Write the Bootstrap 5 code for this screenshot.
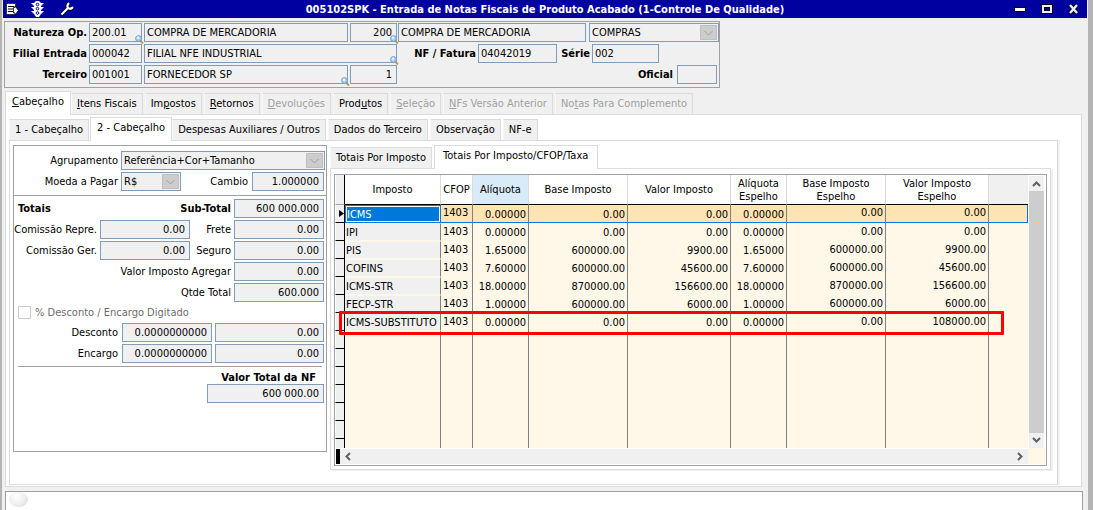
<!DOCTYPE html>
<html lang="pt-BR">
<head>
<meta charset="utf-8">
<meta name="viewport" content="width=device-width, initial-scale=1">
<title>Entrada de Notas Fiscais de Produto Acabado</title>
<link href="https://cdn.jsdelivr.net/npm/bootstrap@5.3.0/dist/css/bootstrap.min.css" rel="stylesheet">
<style>
:root{--face:#f0f0f0;--line:#dcdcdc;--dark:#a0a0a0;--field:#7f9db9;--cream:#fff8e8}
body{font:11px/13px Tahoma,"DejaVu Sans Condensed","DejaVu Sans",sans-serif;color:#000;background:var(--face);border-left:2px solid #b4b4b4;border-right:5px solid #b4b4b4;padding:0 1px}
button,input,select{font:inherit;color:inherit}
.titlebar{background:#0000a0;height:18px;color:#fff}
.titlebar h1{font:inherit;font-weight:bold;margin:0}
.icon-btn{border:0;background:none;padding:0;display:flex;align-items:center;justify-content:center;height:17px}
.tools,.winctl{width:76px;flex:none}
.tools{gap:11px;padding-left:3px}
.winctl{gap:15px;justify-content:flex-end;padding-right:8px}
.panel-head{width:716px;border:1px solid var(--dark);margin:3px 1px 0;padding:1px;height:67px}
.stack{display:flex;flex-direction:column;gap:2px}
.line{display:flex;align-items:center;height:19px}
.line label{text-align:right;flex:none;white-space:nowrap}
.line-tick{height:17px}
.fld{display:block;height:19px;border:1px solid var(--field);background:var(--face);border-radius:0;padding:0 2px;outline:0;min-width:0;flex:none}
.fld.num{text-align:right;padding-right:4px}
select.fld{appearance:none;padding:0 20px 0 2px;opacity:1;background:var(--face) url("data:image/svg+xml,%3Csvg xmlns='http://www.w3.org/2000/svg' width='17' height='15'%3E%3Cpath d='M.5.5h16v14H.5z' fill='%23ccc' stroke='%23bfbfbf'/%3E%3Cpath d='M4.500 6l4 4 4-4' fill='none' stroke='%23a0a0a0'/%3E%3C/svg%3E") no-repeat right 1px center}
.w-s{width:40px}.w-code{width:53px}.w-cur{width:60px}.w-ser{width:67px}.w-nf{width:79px}.w-val{width:90px}.w-tot{width:117px}.w-name{width:204px}.w-nat{width:188px}.w-wide{width:253px}.w-combo{width:130px}.w-n{width:47px}.w-cam{width:72px}.w-disc{width:109px}
.ms-1px{margin-left:1px}.ms-2px{margin-left:2px}.ms-3px{margin-left:3px}.me-1px{margin-right:1px}
.l-head{width:81px;margin-right:2px}.l-side{width:104px}.l-mid{width:41px}.l-ser{width:33px}.dim{color:#6d6d6d}
.lookup{position:relative;flex:none}
.lookup svg{position:absolute;right:-2px;bottom:-2px}
.tabs{display:flex;align-items:flex-end;padding:0;margin:0;gap:2px;position:relative}
.tabs-a{margin:3px 0 0 2px}
.tabs button{height:21px;border:1px solid var(--line);border-left-color:#f8f8f8;border-bottom:0;background:var(--face);padding:0 5px;white-space:nowrap;line-height:20px}
.tabs button.active{background:#fff;height:24px;margin:0 -2px -1px 0;border-left-color:var(--line);position:relative;padding:0 6px 3px}
.tabs-b button.active{margin-left:-1px}
.tabs-c button.active{padding:0 9px 3px 8px}
.tabs button:disabled{color:#a0a0a0}
.pane{background:#fff;border:1px solid var(--line)}
.pane-a{margin:0 5px 0 2px;padding:2px 23px 1px 3px}
.pane-b{box-shadow:2px 0 0 var(--face);padding:4px 6px 14px 3px;display:flex;align-items:flex-start;gap:3px}
.side{width:314px;flex:none;border:1px solid var(--dark);height:307px}
.side .top{border-bottom:1px solid var(--dark);padding:5px 2px 3px 0;height:50px}
.side .sum{padding:3px 2px 0 4px}
.rule{border-top:1px solid var(--dark);margin:1px 2px 2px 0}
.grow-box{min-width:0;flex:1}
.pane-c{padding:5px 3px 3px;box-shadow:2px 1px 0 var(--face)}
.gridbox{border:1px solid var(--dark);display:grid;grid-template-columns:minmax(0,1fr) 18px;background:#fff;grid-template-rows:273px 17px}
.tax{table-layout:fixed;width:100%;border-collapse:separate;border-spacing:0;background:var(--cream)}
.tax th{font-weight:normal;text-align:center;vertical-align:middle;background:#fff;border-right:1px solid var(--line);border-bottom:1px solid #000;height:30px;padding:0}
.tax td{height:18px;padding:1px 2px 0 2px;border-right:1px solid #808080;text-align:right;vertical-align:middle;white-space:nowrap}
.tax td.up{padding:0 2px 2px}
.tax td:nth-child(3){text-align:left}
.tax td:nth-child(2){text-align:left;padding-left:1px;background:var(--face);border-top:1px solid var(--cream);border-bottom:1px solid var(--cream);background-clip:padding-box}
.tax .void td:nth-child(2){background:none;border-top:0;border-bottom:0}
.tax td:first-child,.tax th:first-child{background:var(--face);border-right:1px solid #000;padding:0;border-left:1px solid #fff}
.tax td:first-child{border-bottom:1px solid #000}
.tax th:first-child{border-bottom-color:var(--dark)}
.tax .sorted{background:#d9ebf9}
.tax th:last-child{background:var(--face);border-right:0}
.tax td:last-child{border-right:0}
.tax .cur td{background:#fde4b3;border-bottom:1px solid #0078d7}
.tax .cur td:first-child{background:var(--face);border-bottom-color:#000}
.tax .cur td:last-child{border-right:1px solid #0078d7}
.tax .cur td:nth-child(2){background:#0078d7;color:#fff;border:1px solid #0078d7;box-shadow:inset 0 0 0 1px #fff;padding:0 0 0 1px}
.tax .void.half td{height:9px;line-height:8px;padding:0;border-bottom:0}
.tax tr{position:relative}
.flag{position:absolute;left:4px;right:24px;top:-2px;height:24px;border:3px solid #f00;border-radius:1px;z-index:2}
.vbar{display:flex;flex-direction:column;padding:1px 2px 0 1px}
.vbar .thumb{background:#cdcdcd;flex:1}
.bar-btn{border:0;padding:0;background:var(--face);width:15px;height:15px;display:flex;align-items:center;justify-content:center;flex:none}
.hbar{background:var(--face);border:1px solid #fff;border-right:0;display:flex;justify-content:space-between}
.hbar i{width:4px;background:#000}
.corner{background:var(--cream);margin:0 1px 1px 0}
.status{flex:1;background:#fff;border:1px solid var(--dark);border-bottom:0;margin:4px 4px 0 2px;padding-left:3px}
.orb{width:19px;height:15px;border-radius:50%;background:radial-gradient(circle at 40% 30%,#fff,#eee 55%,#d0d0d0)}
.tick{width:13px;height:13px;appearance:none;border:1px solid #ccc;background:#fff;margin:0 4px 0 0}
</style>
</head>
<body class="d-flex flex-column min-vh-100">
<svg class="d-none" aria-hidden="true"><symbol id="mag" viewBox="0 0 9 9"><path d="M5 5.500l3 3" stroke="#c8904a" stroke-width="1.800"/><circle cx="3.500" cy="3.500" r="2.900" fill="#a9d2f5" stroke="#6f9fd0"/><circle cx="3" cy="2.800" r="1.200" fill="#eaf6ff"/></symbol></svg>
<header class="titlebar d-flex align-items-center">
  <div class="tools d-flex">
    <button class="icon-btn" aria-label="Menu"><svg width="13" height="13" viewBox="0 0 13 13"><path d="M.5.500h9v11h-9z" fill="#fff" stroke="#000" stroke-width=".6"/><path d="M2 3.500h6M2 6h5M2 8.500h5" stroke="#000"/><path d="M7.500 4.500h1.500V3l3.500 4.500L9 12v-2H7.500z" fill="#fff" stroke="#000" stroke-width=".8"/></svg></button>
    <button class="icon-btn" aria-label="Semáforo"><svg width="15" height="16" viewBox="0 0 15 16"><path d="M6 0h3l2 2h3l-3 3v1h3l-3 3v1h3l-3 3-2 3H6l-2-3-3-3h3V9L1 6h3V5L1 2h3z" fill="#fff"/><g fill="#fff" stroke="#0000a0"><circle cx="7.500" cy="3.500" r="1.300"/><circle cx="7.500" cy="7.700" r="1.300"/><circle cx="7.500" cy="12" r="1.300"/></g></svg></button>
    <button class="icon-btn ms-1" aria-label="Ferramentas"><svg width="14" height="14" viewBox="0 0 14 14"><path d="M1.500 12.500L7.500 6.500M8.500 1C6.500 3 6.500 5 8 6.300S11.500 7 13 5" fill="none" stroke="#000" stroke-width="3.400"/><path d="M1.500 12.500L7.500 6.500M9 1C7 3 7 5 8.200 6S11.500 6.700 13 5" fill="none" stroke="#fff" stroke-width="2.200"/></svg></button>
  </div>
  <h1 class="flex-grow-1 text-center">005102SPK - Entrada de Notas Fiscais de Produto Acabado (1-Controle De Qualidade)</h1>
  <div class="winctl d-flex">
    <button class="icon-btn" aria-label="Minimizar"><svg width="12" height="5"><path d="M.5.5h11v4H.5z" fill="#fff" stroke="#000"/></svg></button>
    <button class="icon-btn" aria-label="Maximizar"><svg width="12" height="10"><path d="M2 2h8v6H2z" fill="none" stroke="#000" stroke-width="4"/><path d="M2 2h8v6H2z" fill="none" stroke="#eee" stroke-width="2"/></svg></button>
    <button class="icon-btn" aria-label="Fechar"><svg width="11" height="10"><path d="M2 1l7 8M9 1L2 9" stroke="#000" stroke-width="4"/><path d="M2 1l7 8M9 1L2 9" stroke="#eee" stroke-width="2.400"/></svg></button>
  </div>
</header>

<section class="panel-head stack">
  <div class="line"><label class="l-head fw-bold" for="nat">Natureza Op.</label>
    <span class="lookup"><input id="nat" class="fld w-code" value="200.01" readonly><svg width="9" height="9"><use href="#mag"/></svg></span>
    <input aria-label="Natureza" class="fld w-name ms-2px" value="COMPRA DE MERCADORIA" readonly>
    <span class="lookup ms-2px"><input aria-label="Código" class="fld num w-n" value="200" readonly><svg width="9" height="9"><use href="#mag"/></svg></span>
    <input aria-label="Descrição" class="fld w-nat ms-1px" value="COMPRA DE MERCADORIA" readonly>
    <select aria-label="Tipo" class="fld w-combo ms-3px"><option>COMPRAS</option></select></div>
  <div class="line"><label class="l-head fw-bold" for="fil">Filial Entrada</label>
    <input id="fil" class="fld w-code" value="000042" readonly>
    <span class="lookup ms-2px"><input aria-label="Filial" class="fld w-wide" value="FILIAL NFE INDUSTRIAL" readonly><svg width="9" height="9"><use href="#mag"/></svg></span>
    <label class="w-nf fw-bold" for="nf">NF / Fatura</label><input id="nf" class="fld w-nf ms-2px" value="04042019" readonly>
    <label class="fw-bold l-ser" for="ser">Série</label><input id="ser" class="fld w-ser ms-2px" value="002" readonly></div>
  <div class="line"><label class="l-head fw-bold" for="ter">Terceiro</label>
    <input id="ter" class="fld w-code" value="001001" readonly>
    <span class="lookup ms-2px"><input aria-label="Nome do terceiro" class="fld w-name" value="FORNECEDOR SP" readonly><svg width="9" height="9"><use href="#mag"/></svg></span>
    <input aria-label="Loja" class="fld num w-n ms-2px" value="1" readonly>
    <label class="fw-bold ms-auto me-1" for="ofi">Oficial</label><input id="ofi" class="fld w-s me-1px" readonly></div>
</section>

<nav class="tabs tabs-a" role="tablist">
  <button class="active"><u>C</u>abeçalho</button><button><u>I</u>tens Fiscais</button><button>Im<u>p</u>ostos</button><button><u>R</u>etornos</button><button disabled><u>D</u>evoluções</button><button>Prod<u>u</u>tos</button><button disabled><u>S</u>eleção</button><button disabled><u>N</u>Fs Versão Anterior</button><button disabled>No<u>t</u>as Para Complemento</button>
</nav>
<main class="pane pane-a">
  <nav class="tabs tabs-b" role="tablist">
    <button>1 - Cabeçalho</button><button class="active">2 - Cabeçalho</button><button>Despesas Auxiliares / Outros</button><button>Dados do Terceiro</button><button>Observação</button><button>NF-e</button>
  </nav>
  <div class="pane pane-b">
    <form class="side">
      <div class="top stack">
        <div class="line"><label class="l-side" for="agr">Agrupamento</label><select id="agr" class="fld w-name ms-3px"><option>Referência+Cor+Tamanho</option></select></div>
        <div class="line"><label class="l-side" for="moe">Moeda a Pagar</label><select id="moe" class="fld w-cur ms-3px"><option>R$</option></select><label class="ms-auto" for="cam">Cambio</label><input id="cam" class="fld num w-cam ms-1" value="1.000000" readonly></div>
      </div>
      <div class="sum stack">
        <div class="line"><strong>Totais</strong><label class="fw-bold ms-auto" for="sub">Sub-Total</label><input id="sub" class="fld num w-val ms-3px" value="600 000.000" readonly></div>
        <div class="line justify-content-end"><label for="cr">Comissão Repre.</label><input id="cr" class="fld num w-val ms-3px" value="0.00" readonly><label class="l-mid" for="fre">Frete</label><input id="fre" class="fld num w-val ms-3px" value="0.00" readonly></div>
        <div class="line justify-content-end"><label for="cg">Comissão Ger.</label><input id="cg" class="fld num w-val ms-3px" value="0.00" readonly><label class="l-mid" for="seg">Seguro</label><input id="seg" class="fld num w-val ms-3px" value="0.00" readonly></div>
        <div class="line justify-content-end"><label for="via">Valor Imposto Agregar</label><input id="via" class="fld num w-val ms-3px" value="0.00" readonly></div>
        <div class="line justify-content-end"><label for="qt">Qtde Total</label><input id="qt" class="fld num w-val ms-3px" value="600.000" readonly></div>
        <div class="line line-tick"><input id="pct" type="checkbox" class="tick" disabled><label class="dim" for="pct">% Desconto / Encargo Digitado</label></div>
        <div class="line justify-content-end"><label for="des">Desconto</label><input id="des" class="fld num w-val ms-1" value="0.0000000000" readonly><input aria-label="Valor do desconto" class="fld num w-disc ms-3px" value="0.00" readonly></div>
        <div class="line justify-content-end"><label for="enc">Encargo</label><input id="enc" class="fld num w-val ms-1" value="0.0000000000" readonly><input aria-label="Valor do encargo" class="fld num w-disc ms-3px" value="0.00" readonly></div>
        <div class="rule"></div>
        <div class="d-flex flex-column align-items-end"><label class="fw-bold pe-2" for="vt">Valor Total da NF</label><input id="vt" class="fld num w-tot" value="600 000.00" readonly></div>
      </div>
    </form>
    <div class="grow-box">
      <nav class="tabs tabs-c" role="tablist"><button>Totais Por Imposto</button><button class="active">Totais Por Imposto/CFOP/Taxa</button></nav>
      <div class="pane pane-c">
        <div class="gridbox">
          <table class="tax">
            <colgroup><col style="width:10px"><col style="width:96px"><col style="width:32px"><col style="width:56px"><col style="width:99px"><col style="width:103px"><col style="width:56px"><col style="width:99px"><col style="width:103px"><col></colgroup>
            <thead><tr><th></th><th>Imposto</th><th>CFOP</th><th class="sorted">Alíquota</th><th>Base Imposto</th><th>Valor Imposto</th><th>Alíquota<br>Espelho</th><th>Base Imposto<br>Espelho</th><th>Valor Imposto<br>Espelho</th><th></th></tr></thead>
            <tbody>
            <tr class="cur"><td><svg class="d-block ms-auto" width="6" height="7"><path d="M1 0l5 3.500L1 7z"/></svg></td><td>ICMS</td><td class="up">1403</td><td>0.00000</td><td>0.00</td><td>0.00</td><td>0.00000</td><td class="up">0.00</td><td class="up">0.00</td><td></td></tr>
            <tr><td></td><td>IPI</td><td class="up">1403</td><td>0.00000</td><td>0.00</td><td>0.00</td><td>0.00000</td><td class="up">0.00</td><td class="up">0.00</td><td></td></tr>
            <tr><td></td><td>PIS</td><td class="up">1403</td><td>1.65000</td><td>600000.00</td><td>9900.00</td><td>1.65000</td><td class="up">600000.00</td><td class="up">9900.00</td><td></td></tr>
            <tr><td></td><td>COFINS</td><td class="up">1403</td><td>7.60000</td><td>600000.00</td><td>45600.00</td><td>7.60000</td><td class="up">600000.00</td><td class="up">45600.00</td><td></td></tr>
            <tr><td></td><td>ICMS-STR</td><td class="up">1403</td><td>18.00000</td><td>870000.00</td><td>156600.00</td><td>18.00000</td><td class="up">870000.00</td><td class="up">156600.00</td><td></td></tr>
            <tr><td></td><td>FECP-STR</td><td class="up">1403</td><td>1.00000</td><td>600000.00</td><td>6000.00</td><td>1.00000</td><td class="up">600000.00</td><td class="up">6000.00</td><td></td></tr>
            <tr><td><span class="flag"></span></td><td>ICMS-SUBSTITUTO</td><td class="up">1403</td><td>0.00000</td><td>0.00</td><td>0.00</td><td>0.00000</td><td class="up">0.00</td><td class="up">108000.00</td><td></td></tr>
            <tr class="void"><td></td><td></td><td></td><td></td><td></td><td></td><td></td><td></td><td></td><td></td></tr>
            <tr class="void"><td></td><td></td><td></td><td></td><td></td><td></td><td></td><td></td><td></td><td></td></tr>
            <tr class="void"><td></td><td></td><td></td><td></td><td></td><td></td><td></td><td></td><td></td><td></td></tr>
            <tr class="void"><td></td><td></td><td></td><td></td><td></td><td></td><td></td><td></td><td></td><td></td></tr>
            <tr class="void"><td></td><td></td><td></td><td></td><td></td><td></td><td></td><td></td><td></td><td></td></tr>
            <tr class="void"><td></td><td></td><td></td><td></td><td></td><td></td><td></td><td></td><td></td><td></td></tr>
            <tr class="void half"><td></td><td></td><td></td><td></td><td></td><td></td><td></td><td></td><td></td><td></td></tr>
            </tbody>
          </table>
          <div class="vbar"><button type="button" class="bar-btn" aria-label="Acima"><svg width="9" height="7"><path d="M1 6l3.500-3.500L8 6" fill="none" stroke="#606060" stroke-width="2"/></svg></button><div class="thumb"></div><button type="button" class="bar-btn" aria-label="Abaixo"><svg width="9" height="7"><path d="M1 1l3.500 3.500L8 1" fill="none" stroke="#606060" stroke-width="2"/></svg></button></div>
          <div class="hbar"><i></i><button type="button" class="bar-btn me-auto" aria-label="Esquerda"><svg width="7" height="9"><path d="M6 1L2.500 4.500 6 8" fill="none" stroke="#606060" stroke-width="2"/></svg></button><button type="button" class="bar-btn" aria-label="Direita"><svg width="7" height="9"><path d="M1 1l3.500 3.500L1 8" fill="none" stroke="#606060" stroke-width="2"/></svg></button></div>
          <div class="corner"></div>
        </div>
      </div>
    </div>
  </div>
</main>
<footer class="status"><div class="orb"></div></footer>
<script src="https://cdn.jsdelivr.net/npm/bootstrap@5.3.0/dist/js/bootstrap.bundle.min.js"></script>
</body>
</html>
